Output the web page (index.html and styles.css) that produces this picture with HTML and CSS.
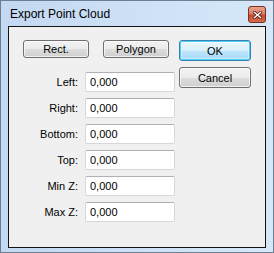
FILE: index.html
```html
<!DOCTYPE html>
<html>
<head>
<meta charset="utf-8">
<link rel="stylesheet" href="styles.css">
</head>
<body>
<div class="window">
  <div class="titlebar">
    <span class="title">Export Point Cloud</span>
    <div class="close">
      <svg width="9" height="8" viewBox="0 0 9 8">
        <path d="M1.5 1.5 L7.5 6.5 M7.5 1.5 L1.5 6.5" stroke="#5a241a" stroke-width="3" stroke-linecap="square"/>
        <path d="M1.5 1.5 L7.5 6.5 M7.5 1.5 L1.5 6.5" stroke="#ffffff" stroke-width="1.4" stroke-linecap="square"/>
      </svg>
    </div>
  </div>
  <div class="client">
    <div class="left">
      <div class="btnrow">
        <div class="btn">Rect.</div>
        <div class="btn">Polygon</div>
      </div>
      <div class="form">
        <label class="lbl">Left:</label><div class="field">0,000</div>
        <label class="lbl">Right:</label><div class="field">0,000</div>
        <label class="lbl">Bottom:</label><div class="field">0,000</div>
        <label class="lbl">Top:</label><div class="field">0,000</div>
        <label class="lbl">Min Z:</label><div class="field">0,000</div>
        <label class="lbl">Max Z:</label><div class="field">0,000</div>
      </div>
    </div>
    <div class="right">
      <div class="btn big default">OK</div>
      <div class="btn big">Cancel</div>
    </div>
  </div>
</div>
</body>
</html>
```
FILE: styles.css
```css
html, body {
  margin: 0;
  padding: 0;
  background: #ffffff;
}
body {
  font-family: "Liberation Sans", Arial, sans-serif;
  font-size: 11px;
  color: #000;
}
.window {
  width: 274px;
  height: 253px;
  box-sizing: border-box;
  border: 1px solid #6f7f92;
  background: linear-gradient(to right, #c3d8f1 0%, #cfe2f7 60%, #d6e7f9 100%);
  padding: 0 7px 4px 7px;
  display: flex;
  flex-direction: column;
}
.titlebar {
  height: 25px;
  display: flex;
  align-items: center;
  justify-content: space-between;
  padding-left: 2px;
}
.title {
  font-size: 12px;
  color: #000;
}
.close {
  width: 18px;
  height: 17px;
  box-sizing: border-box;
  border: 1px solid #7a3226;
  border-radius: 3px;
  background-color: #d2614a;
  background-image: linear-gradient(to bottom, #e9a28f 0%, #dd7f66 45%, #c8492f 55%, #d46c4f 100%);
  display: flex;
  align-items: center;
  justify-content: center;
  margin-top: 2px;
}
.client {
  flex: 1;
  border: 1px solid #141414;
  background: #f0f0f0;
  display: flex;
  padding: 13px 0 0 14px;
  gap: 4px;
}
.left {
  width: 152px;
  display: flex;
  flex-direction: column;
  gap: 14px;
}
.btnrow {
  display: flex;
  gap: 14px;
}
.btn {
  width: 66px;
  height: 18px;
  box-sizing: border-box;
  border: 1px solid #707070;
  border-radius: 3px;
  background: linear-gradient(to bottom, #f2f2f2 0%, #ebebeb 50%, #dddddd 51%, #cfcfcf 100%);
  box-shadow: inset 0 0 0 1px rgba(255,255,255,0.7);
  display: flex;
  align-items: center;
  justify-content: center;
  color: #000;
}
.form {
  display: grid;
  grid-template-columns: 55px 90px;
  column-gap: 7px;
  row-gap: 6px;
  align-items: center;
}
.lbl {
  text-align: right;
}
.field {
  height: 20px;
  box-sizing: border-box;
  background: #fff;
  border: 1px solid #d4d8de;
  border-top-color: #acb0b7;
  border-radius: 2px;
  padding-left: 4px;
  display: flex;
  align-items: center;
}
.right {
  display: flex;
  flex-direction: column;
  gap: 6px;
}
.btn.big {
  width: 72px;
  height: 21px;
}
.btn.default {
  border-color: #3c7fb1;
  background: linear-gradient(to bottom, #eaf6fd 0%, #d9f0fc 50%, #bee6fd 51%, #a7d9f5 100%);
  box-shadow: inset 0 0 0 1px #48d0f8, inset 0 0 0 2px rgba(255,255,255,0.4);
}
```
